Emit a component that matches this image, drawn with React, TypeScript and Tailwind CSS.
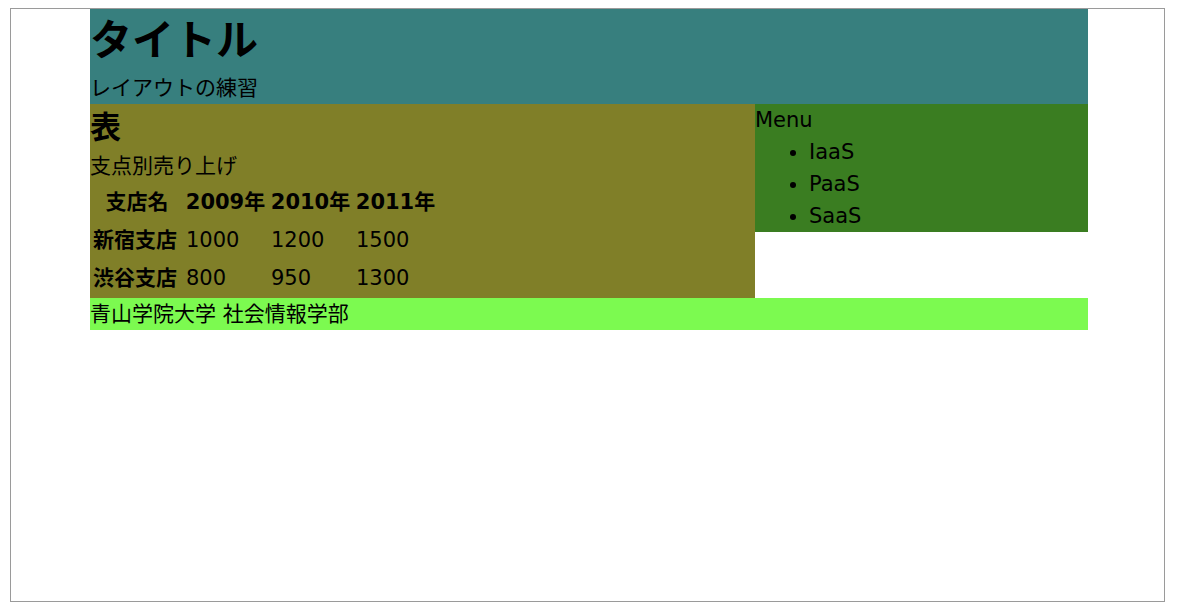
const rows = [
  { name: "新宿支店", v: ["1000", "1200", "1500"] },
  { name: "渋谷支店", v: ["800", "950", "1300"] },
];

const App = () => {
  return (
    <div className="bg-white min-h-screen pt-[8px] pl-[10px] font-['DejaVu_Sans','Noto_Sans_CJK_JP',sans-serif] text-[21px] leading-[32px] text-black">
      <div className="w-[1155px] h-[594px] border border-[#9a9a9a]">
        <div className="ml-[79px] w-[998px]">
          <header className="bg-[#377f7e]">
            <h1 className="text-[42px] leading-[63px] font-bold">タイトル</h1>
            <p>レイアウトの練習</p>
          </header>

          <div className="flex items-start">
            <main className="w-[665px] bg-[#807f28]">
              <h2 className="text-[31px] leading-[46px] font-bold">表</h2>
              <p>支点別売り上げ</p>
              <table className="table-fixed w-[349px] border-separate border-spacing-[2px]">
                <thead>
                  <tr className="h-[36px]">
                    <th className="w-[90px] p-[1px] font-bold text-center">支店名</th>
                    <th className="w-[83px] p-[1px] font-bold text-center">2009年</th>
                    <th className="w-[83px] p-[1px] font-bold text-center">2010年</th>
                    <th className="w-[83px] p-[1px] font-bold text-center">2011年</th>
                  </tr>
                </thead>
                <tbody>
                  {rows.map((r) => (
                    <tr key={r.name} className="h-[36px]">
                      <th className="p-[1px] font-bold text-left">{r.name}</th>
                      {r.v.map((n, i) => (
                        <td key={i} className="p-[1px] pl-[2px]">{n}</td>
                      ))}
                    </tr>
                  ))}
                </tbody>
              </table>
            </main>

            <aside className="flex-1 bg-[#3a7d21]">
              <p>Menu</p>
              <ul className="list-disc pl-[54px]">
                <li>IaaS</li>
                <li>PaaS</li>
                <li>SaaS</li>
              </ul>
            </aside>
          </div>

          <footer className="bg-[#7cfa50]">
            <p>青山学院大学 社会情報学部</p>
          </footer>
        </div>
      </div>
    </div>
  );
};

export default App;
